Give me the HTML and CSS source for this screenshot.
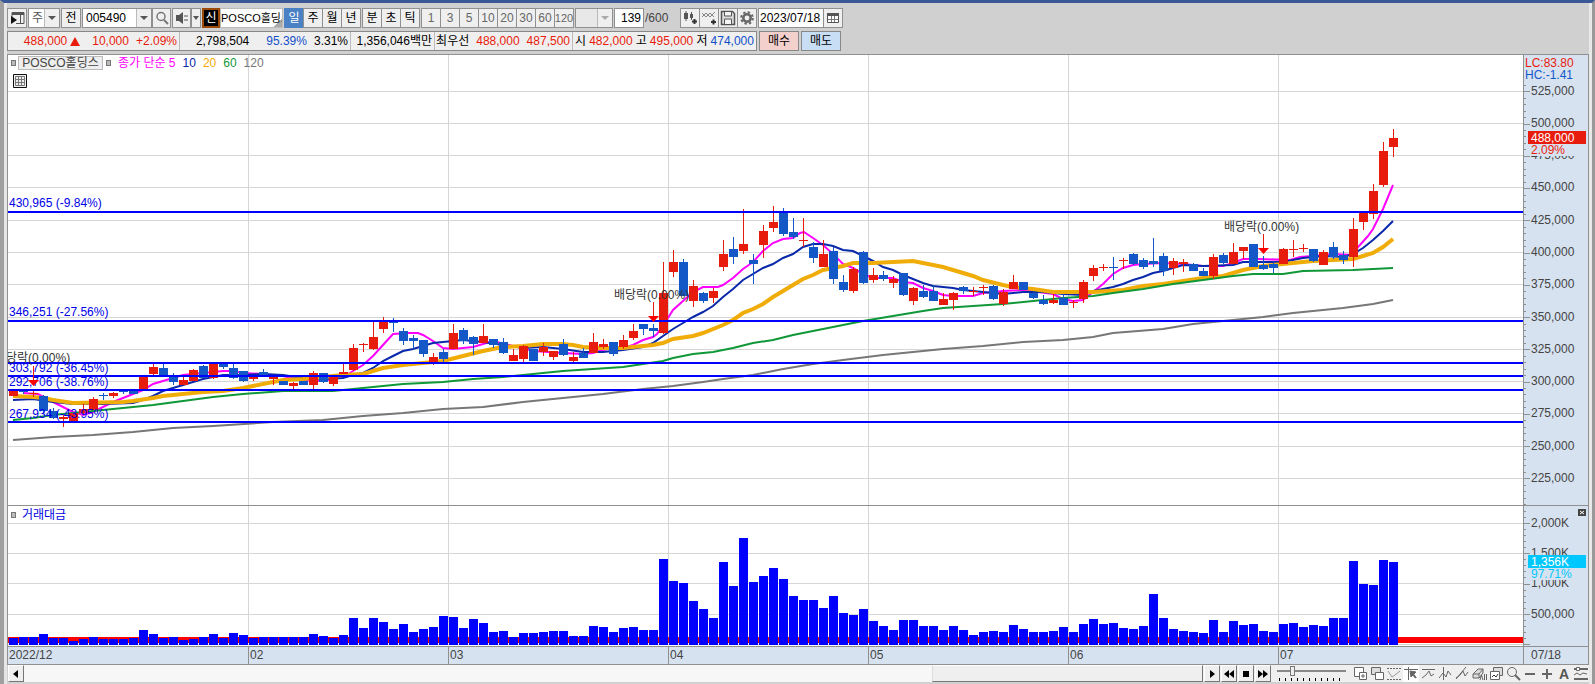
FILE: index.html
```html
<!DOCTYPE html>
<html lang="ko">
<head>
<meta charset="utf-8">
<title>POSCO홀딩스 차트</title>
<link rel="stylesheet" href="styles.css">
</head>
<body>
<main class="window">
  <header class="toolbar">
    <button class="btn" aria-label="패널"><svg width="16" height="16" viewBox="0 0 16 16"><path d="M3 13V2.500H15V13.500H7" fill="none" stroke="#555"/><path d="M3 3h12v2H3z" fill="#555"/><path d="M11.500 5v8" stroke="#555"/><path d="M2 6l6 4-6 4z" fill="#111"/></svg></button>
    <span class="drop drop-market"><select aria-label="시장"><option>주</option></select></span>
    <button class="btn before">전</button>
    <span class="drop drop-code"><input type="text" value="005490" aria-label="종목코드"></span>
    <button class="btn slim" aria-label="검색"><svg width="16" height="16" viewBox="0 0 16 16"><circle cx="7" cy="6.500" r="4" fill="none" stroke="#777" stroke-width="1.500"/><path d="M10 10l4 4" stroke="#777" stroke-width="2"/></svg></button>
    <button class="btn slim sound" aria-label="소리"><svg width="16" height="16" viewBox="0 0 16 16"><path d="M2 5h3l4-3v12l-4-3H2z" fill="#555"/><path d="M11 5v6M13 5v6" stroke="#555" stroke-dasharray="2 2"/></svg></button>
    <button class="btn mini" aria-label="소리 메뉴"><i class="caret"></i></button>
    <span class="badge">신</span>
    <span class="name">POSCO홀딩스</span>
    <div class="group">
      <button class="btn on">일</button><button class="btn">주</button><button class="btn">월</button><button class="btn">년</button>
    </div>
    <div class="group">
      <button class="btn">분</button><button class="btn">초</button><button class="btn">틱</button>
    </div>
    <div class="group dim">
      <button class="btn">1</button><button class="btn">3</button><button class="btn">5</button><button class="btn">10</button><button class="btn">20</button><button class="btn">30</button><button class="btn">60</button><button class="btn">120</button>
    </div>
    <span class="drop drop-off"><select aria-label="주기" disabled><option></option></select></span>
    <label class="count"><input type="text" value="139" aria-label="봉 개수">/600</label>
    <div class="group">
      <button class="btn" aria-label="차트 추가"><svg width="16" height="16" viewBox="0 0 16 16"><path d="M2 3h4v6H2zM8 4h3v4H8z" fill="#555"/><path d="M4 1v10M9.500 2v8" stroke="#555" fill="none"/><path d="M10 11.500h5M12.500 9v5" stroke="#333" stroke-width="2"/></svg></button>
      <button class="btn" aria-label="지표 추가"><svg width="16" height="16" viewBox="0 0 16 16"><path d="M1 7l4-4 4 4 5-5M1 3l4 4 4-4 4 4" fill="none" stroke="#888"/><path d="M10 12h5M12.500 9.500v5" stroke="#333" stroke-width="2"/></svg></button>
      <button class="btn" aria-label="저장"><svg width="16" height="16" viewBox="0 0 16 16"><path d="M1.500 1.500h11l2 2v11h-13z" fill="#ddd" stroke="#555" stroke-width="1.500"/><path d="M4.500 2v4h7V2M4.500 14V9h7v5" fill="#f5f5f5" stroke="#555"/></svg></button>
      <button class="btn" aria-label="설정"><svg width="16" height="16" viewBox="0 0 16 16"><circle cx="8" cy="8" r="3.700" fill="none" stroke="#666" stroke-width="2.500"/><circle cx="8" cy="8" r="5.800" fill="none" stroke="#666" stroke-width="2" stroke-dasharray="2.400 2.150"/></svg></button>
    </div>
    <div class="date"><input type="text" value="2023/07/18" aria-label="날짜"><button class="btn" aria-label="달력"><svg width="16" height="16" viewBox="0 0 16 16"><path d="M2.500 3.500h11v9h-11z" fill="#fff" stroke="#555"/><path d="M2 3h12v3H2z" fill="#555"/><path d="M3 9.500h10M6.500 6v6M9.500 6v6" stroke="#777"/></svg></button></div>
  </header>

  <section class="quotes">
    <div class="quote-box">
      <div class="cell cell-price"><span class="up">488,000</span><i class="tri"></i><span class="up diff">10,000</span><span class="up">+2.09%</span></div>
      <div class="cell cell-vol"><span>2,798,504</span><span class="down">95.39%</span><span>3.31%</span></div>
      <div class="cell cell-amt"><span>1,356,046백만</span></div>
      <div class="cell cell-best"><span>최우선</span><span class="up">488,000</span><span class="up">487,500</span></div>
      <div class="cell cell-ohl"><span>시</span><span class="up">482,000</span><span>고</span><span class="up">495,000</span><span>저</span><span class="down">474,000</span></div>
    </div>
    <button class="trade buy">매수</button>
    <button class="trade sell">매도</button>
  </section>

  <section class="chart">
    <div class="pane price-pane">
      <svg class="plot" id="price" role="img" aria-label="일봉 차트"></svg>
      <div class="legend">
        <i class="dot"></i><span class="chip">POSCO홀딩스</span><i class="dot"></i>
        <span class="ma5">종가 단순 5</span><span class="ma10">10</span><span class="ma20">20</span><span class="ma60">60</span><span class="ma120">120</span>
      </div>
      <button class="grid-btn" aria-label="표"><svg width="14" height="14" viewBox="0 0 14 14"><path d="M.5 .5h13v13H.5z" fill="#eee" stroke="#111"/><path d="M2.500 2.500h9v9h-9zM5.500 3v9M8.500 3v9M2 5.500h10M2 8.500h10" fill="none" stroke="#777"/></svg></button>
    </div>
    <svg class="scale" id="priceScale" role="img" aria-label="가격 축"></svg>
    <div class="pane volume-pane">
      <svg class="plot" id="volume" role="img" aria-label="거래대금 차트"></svg>
      <div class="legend"><i class="dot"></i><span class="vol">거래대금</span></div>
    </div>
    <svg class="scale" id="volumeScale" role="img" aria-label="거래대금 축"></svg>
    <svg class="months" id="months" role="img" aria-label="날짜 축"></svg>
    <div class="today">07/18</div>
  </section>

  <footer class="bottom">
    <button class="step" aria-label="왼쪽"><svg width="14" height="14" viewBox="0 0 14 14"><path d="M9 3v8L4 7z"/></svg></button>
    <div class="track"><div class="thumb"></div></div>
    <button class="step" aria-label="재생"><svg width="14" height="14" viewBox="0 0 14 14"><path d="M5 3v8l5-4z"/></svg></button>
    <button class="step" aria-label="뒤로"><svg width="14" height="14" viewBox="0 0 14 14"><path d="M7 3v8L2 7zM12 3v8L7 7z"/></svg></button>
    <button class="step" aria-label="정지"><svg width="14" height="14" viewBox="0 0 14 14"><path d="M4 4h6v6H4z"/></svg></button>
    <button class="step" aria-label="앞으로"><svg width="14" height="14" viewBox="0 0 14 14"><path d="M2 3v8l5-4zM7 3v8l5-4z"/></svg></button>
    <div class="speed"><input type="range" min="0" max="10" value="2" aria-label="속도"></div>
    <div class="draw">
      <button aria-label="창 추가"><svg viewBox="0 0 16 16"><path d="M2.500 1.500h9v9h-9z" fill="#fff"/><path d="M7.500 6.500h7v7h-7z" fill="#fff"/><path d="M11 8v4M9 10h4"/></svg></button>
      <button aria-label="창 겹침"><svg viewBox="0 0 16 16"><path d="M2.500 1.500h9v7h-9z" fill="#ddd"/><path d="M6.500 6.500h8v7h-8z" fill="#fff"/></svg></button>
      <button aria-label="구간"><svg viewBox="0 0 16 16"><path d="M1 2.500h14M1 13.500h14" stroke-dasharray="2 1"/><path d="M2 5l4 6 3-2 5-4" stroke="#999"/></svg></button>
      <button class="active" aria-label="포인터"><svg viewBox="0 0 16 16"><path d="M1 3.500h14M5.500 1v13"/><path d="M7 5l6 1-5 5z" fill="#666"/><path d="M9 7l4 5" stroke-width="2"/></svg></button>
      <button aria-label="수평선"><svg viewBox="0 0 16 16"><path d="M2 3.500h13M2 12l4-3 3-4 2 5 3-2"/></svg></button>
      <button aria-label="수직선"><svg viewBox="0 0 16 16"><path d="M6.500 1v13M2 12l4-5 3 4 2-6 3 4"/></svg></button>
      <button aria-label="추세선"><svg viewBox="0 0 16 16"><path d="M2 13L12 1M2 12l4-3 3-4 2 5 3-4"/></svg></button>
      <button aria-label="전체 지우기"><svg viewBox="0 0 16 16"><path d="M2 8l5-5h5L8 8zM2 8v4h6V8M8 12l4-5V3" fill="#ddd"/><path d="M9 14l1.500-5 1.500 5M13.500 8v6M15.500 8v6"/></svg></button>
      <button aria-label="차트 복사"><svg viewBox="0 0 16 16"><path d="M5.500 1.500h9v8h-9z" fill="#ddd"/><path d="M2.500 5.500h9v8h-9z" fill="#fff"/><path d="M4 11l2-2 2 2 2-3" stroke="#333"/></svg></button>
      <button aria-label="돋보기"><svg viewBox="0 0 16 16"><circle cx="7" cy="6" r="4.500"/><path d="M10 9l5 5" stroke-width="2"/></svg></button>
      <button aria-label="축소"><svg viewBox="0 0 16 16"><path d="M3 8h10" stroke-width="2"/></svg></button>
      <button aria-label="확대"><svg viewBox="0 0 16 16"><path d="M3 8h10M8 3v10" stroke-width="2"/></svg></button>
      <button class="letter" aria-label="글자">A</button>
      <button aria-label="설정"><svg viewBox="0 0 16 16"><path d="M1 3h14M1 13h14" stroke-width="2"/><path d="M1 9l3-2 3 2 3-2 4 1"/><path d="M3.500 1.500h3v3h-3z" fill="#fff"/></svg></button>
    </div>
  </footer>
</main>
<script src="chart.js"></script>
</body>
</html>
```

FILE: styles.css
```css
:root {
  --ui: "Liberation Sans", "Noto Sans CJK KR", sans-serif;
  --line: #909090;
  --axis: #d7e2f0;
  --red: #e81c0c;
  --blue: #1450c8;
}
* { box-sizing: border-box; }
body { margin: 0; font: 12px/16px var(--ui); color: #000; background: #d0d0d0; }
button, input, select { font: inherit; color: inherit; margin: 0; padding: 0; border-radius: 0; }
button { display: flex; align-items: center; justify-content: center; white-space: nowrap; }

.window {
  min-height: 100vh;
  display: flex;
  flex-direction: column;
  border-top: 3px solid #3a5898;
  border-left: 4px solid #a0a0a0;
  border-right: 3px solid #999;
  box-shadow: inset 3px 0 #e6e6e6, inset -3px 0 #e8e8e8;
  padding: 5px 3px 2px 3px;
}

/* top toolbar */
.toolbar { display: flex; height: 20px; gap: 1px; }
.btn { width: 20px; height: 20px; border: 1px solid var(--line); background: #efefef; overflow: hidden; flex: none; }
.btn svg { flex: none; }
.btn.slim { width: 19px; }
.sound { margin-right: -1px; }
.mini { width: 10px; }
.caret, .drop::after { content: ""; border: 4px solid transparent; border-top-color: #555; border-bottom: 0; }
.mini .caret { border-left-width: 3px; border-right-width: 3px; }
.drop { position: relative; display: flex; border: 1px solid var(--line); background: #fff; flex: none; }
.drop::before { content: ""; position: absolute; right: 0; top: 0; width: 14px; height: 18px; background: #efefef; border-left: 1px solid #bbb; pointer-events: none; }
.drop::after { position: absolute; right: 3px; top: 7px; pointer-events: none; }
.drop select, .drop input { appearance: none; border: 0; background: none; width: 100%; padding-left: 3px; }
.drop-market { width: 32px; color: #555; }
.drop-code { width: 70px; margin-right: -1px; }
.drop-off { width: 38px; background: #e8e8e8; }
.drop-off::after { border-top-color: #aaa; }
.badge { width: 18px; background: #000; color: #fff; border: 2px solid #9c4a08; text-align: center; line-height: 16px; margin-right: -1px; flex: none; }
.name { width: 63px; height: 20px; background: linear-gradient(135deg, transparent 50%, #aaa 50%) right bottom / 8px 8px no-repeat #fff; border: 1px solid #bbb; font-size: 11px; line-height: 18px; overflow: hidden; white-space: nowrap; flex: none; }
.group { display: flex; }
.group .btn + .btn { margin-left: -1px; }
.group .on { background: #4a80c4; color: #fff; border-color: #4a80c4; }
.dim { color: #666; }
.dim .btn:last-child { font-size: 11px; }
.count { display: flex; line-height: 20px; width: 65px; color: #444; flex: none; }
.count input { width: 30px; height: 20px; border: 1px solid var(--line); background: #fff; text-align: right; padding-right: 2px; color: #000; margin-right: 1px; }
.date { display: flex; }
.date input { width: 65px; height: 20px; border: 1px solid var(--line); border-right: 0; background: #fff; padding-left: 1px; }

/* quote line */
.quotes { display: flex; gap: 2px; margin: 3px 0 3px; height: 20px; }
.quote-box { display: flex; border: 1px solid #888; background: #efefef; }
.cell { display: flex; align-items: center; justify-content: flex-end; white-space: nowrap; padding-right: 2px; }
.cell + .cell { border-left: 1px solid #bbb; }
.cell-price { width: 171px; }
.cell-vol { width: 171px; gap: 7px; }
.cell-vol span:first-child { margin-right: 10px; }
.cell-amt { width: 84px; }
.cell-best { width: 138px; gap: 7px; }
.cell-ohl { width: 184px; justify-content: space-between; padding-left: 2px; }
.diff { margin: 0 7px 0 12px; }
.tri { border: 5px solid transparent; border-bottom: 9px solid var(--red); border-top: 0; margin-left: 3px; }
.up { color: var(--red); }
.down { color: var(--blue); }
.trade { width: 40px; border: 1px solid #888; }
.buy { background: #f4d0cc; }
.sell { background: #c8def4; }

/* chart */
.chart { display: grid; grid-template-columns: 1fr 65px; border: 1px solid var(--line); background: #fff; }
.pane { position: relative; min-width: 0; }
.plot, .scale, .months { display: block; width: 100%; overflow: hidden; }
.price-pane, #priceScale { height: 450px; }
.volume-pane, #volumeScale { height: 141px; border-top: 1px solid var(--line); }
.plot { height: 100%; }
.scale, .today { border-left: 1px solid var(--line); background: var(--axis); }
.months, .today { height: 18px; border-top: 1px solid var(--line); background: var(--axis); }
.today { padding-left: 7px; color: #444; }
svg text { font: 12px var(--ui); fill: #444; }
svg .note { fill: #333; }
svg .fib { fill: #0000e8; }
.legend { position: absolute; left: 3px; top: 1px; display: flex; align-items: center; height: 14px; white-space: nowrap; }
.dot { width: 5px; height: 6px; background: #bbb; border: 1px solid #777; }
.chip { background: #eee; border: 1px solid #bbb; line-height: 12px; width: 85px; text-align: center; margin: 0 3px 0 2px; color: #444; }
.ma5, .ma10, .ma20, .ma60 { margin-right: 7px; }
.ma5 { color: #f0f; margin-left: 7px; }
.ma10 { color: #0a28aa; }
.ma20 { color: #f0ac08; }
.ma60 { color: #109838; }
.ma120 { color: #777; }
.volume-pane .legend { top: 2px; }
.vol { color: #0000e0; margin-left: 6px; }
.grid-btn { position: absolute; left: 5px; top: 19px; border: 0; background: none; }

/* bottom bar */
.bottom { display: flex; height: 17px; background: #efefef; margin-left: 1px; }
.step { width: 16px; height: 17px; background: #efefef; border: 1px solid; border-color: #fff #777 #777 #fff; margin-right: 1px; flex: none; overflow: hidden; }
.step:first-child { margin-right: 0; }
.track { flex: 1; background: #f7f7f7; display: flex; justify-content: flex-end; margin-right: 1px; }
.thumb { width: 23%; background: #efefef; border: 1px solid; border-color: #fff #777 #777 #ddd; }
.speed { width: 80px; padding: 1px 5px 0; background: repeating-linear-gradient(90deg, #000 0 1px, transparent 1px 6px) 7px 13px / 66px 3px no-repeat; }
.speed input { appearance: none; display: block; width: 69px; height: 10px; background: linear-gradient(#888, #888) 0 4px / 100% 2px no-repeat; }
.speed input::-webkit-slider-thumb { appearance: none; width: 5px; height: 10px; background: #eee; border: 1px solid #777; }
.draw { display: flex; gap: 1px; }
.draw button { width: 16px; height: 17px; border: 0; background: none; }
.draw svg { width: 16px; height: 16px; fill: none; stroke: #666; flex: none; }
.draw .active { background: #fff; }
.draw .letter { font-weight: bold; font-size: 14px; color: #555; }
```

FILE: chart.js
```js
// Chart space: x0/y0 is the plot's top left corner, one session every 10 units.
const X0 = 8, Y0 = 55, VY0 = 506;
const cx = i => 13 + 10 * i;
const RED = '#e81c0c', BLUE = '#1458c8';

// color, body top, body bottom, high, low
const candles = `r 391 396 391 396|b 391 392 389 394|r 393 394 389 397|b 396 411 395 413|b 411 418 408 419|r 417 419 415 427|r 413 421 413 421|r 409 413 404 415|r 399 410 397 410|b 395 396 393 400|r 393 396 392 398|b 391 392 390 394|b 390 394 390 394|r 377 389 377 389|r 367 374 363 375|b 368 375 363 376|b 377 382 373 385|r 380 385 376 385|r 370 381 369 381|b 366 378 365 378|r 363 378 363 379|b 363 367 363 369|b 368 378 363 379|b 371 381 371 382|r 376 379 376 381|b 372 375 369 375|r 377 379 377 385|b 381 385 381 385|r 383 386 382 389|b 381 385 381 385|r 373 385 371 389|b 373 382 373 383|r 377 384 377 386|r 372 374 363 374|r 348 370 344 371|r 344 345 343 352|r 337 349 320 350|r 322 329 317 333|b 322 323 318 332|b 331 341 328 345|b 338 341 335 349|b 340 354 340 357|r 357 363 353 365|b 352 359 349 362|r 333 349 324 349|b 330 341 328 344|b 337 344 336 355|r 336 343 324 343|b 339 345 339 348|b 342 353 338 354|r 355 361 349 361|r 346 359 345 362|b 349 361 349 361|r 347 352 343 356|r 351 357 351 360|b 344 355 339 356|r 357 361 352 363|b 353 358 348 358|r 342 353 333 353|r 344 347 339 349|b 342 354 342 356|r 340 347 335 349|r 331 338 324 340|b 324 329 324 335|b 328 331 324 337|r 293 333 262 334|r 262 272 250 277|b 262 296 259 296|r 286 301 280 307|b 293 301 292 303|r 291 298 288 303|r 254 267 240 271|b 249 257 237 264|r 244 251 209 254|b 260 264 254 284|r 231 245 225 258|r 222 228 206 232|b 212 234 208 236|b 232 237 218 239|r 240 241 218 247|b 247 258 242 263|r 254 267 240 267|b 251 279 247 284|b 282 290 275 292|r 269 291 267 293|b 252 283 251 284|r 275 280 268 283|b 275 279 271 281|r 279 283 276 288|b 273 295 273 296|r 288 301 287 305|b 291 297 285 298|b 291 301 285 301|r 299 305 293 305|r 293 300 292 310|b 287 291 286 294|r 291 292 287 296|r 287 288 285 295|b 286 299 285 300|r 292 304 289 306|r 282 289 275 289|b 282 290 282 290|b 293 298 292 299|b 300 304 295 305|r 300 303 294 304|b 298 305 294 305|r 302 303 300 308|r 282 299 280 303|r 268 276 265 281|r 267 268 264 271|b 267 268 257 280|r 260 261 258 269|b 254 264 253 265|b 260 267 258 269|b 261 264 238 267|b 256 271 253 276|r 261 268 258 275|r 262 264 259 272|b 264 271 263 271|b 271 276 268 276|r 257 276 254 279|b 255 263 253 264|r 252 264 243 264|r 247 251 247 259|b 244 267 244 267|b 265 269 256 270|b 264 268 262 273|r 249 264 248 264|r 249 250 240 257|r 248 249 244 252|b 249 261 249 262|r 252 265 250 265|b 247 257 242 259|b 255 260 251 264|r 229 257 218 267|r 213 222 213 230|r 191 214 184 219|r 151 185 142 187|r 138 147 129 157`
  .split('|').map(s => s.split(' '));

const averages = [
  ['#f0f', 2, '23,393 38,394 53,402 63,407 73,412 83,415 93,412 103,407 113,402 123,398 133,394 143,390 153,384 163,381 173,378 183,375 203,373 223,371 233,371 243,373 263,374 283,376 300,380 323,381 343,377 353,371 363,365 373,356 383,345 393,334 408,333 418,333 423,335 433,341 443,348 453,349 473,347 483,344 493,341 513,346 523,348 533,351 563,353 583,354 593,353 603,350 613,348 623,348 633,345 643,340 653,337 657,334 663,325 668,318 673,310 683,301 693,292 703,287 718,287 723,285 733,278 743,269 753,262 763,251 773,243 783,239 793,238 800,233 804,232 813,238 823,245 833,254 843,264 853,268 863,274 873,278 893,278 903,282 913,283 923,288 933,291 943,295 953,296 973,296 983,293 1003,291 1023,290 1053,294 1063,299 1073,301 1083,300 1093,292 1103,284 1113,274 1123,268 1133,265 1143,264 1163,263 1183,264 1203,266 1223,266 1233,263 1243,259 1258,259 1290,260 1300,257 1313,256 1333,254 1353,255 1358,247 1368,236 1373,229 1383,209 1393,185'],
  ['#0a28aa', 2, '13,400 33,399 53,402 73,404 103,404 133,403 143,400 153,396 163,391 183,385 203,379 223,375 243,375 263,374 283,375 303,378 323,379 343,378 353,375 363,373 373,368 383,361 393,356 403,351 413,349 433,343 443,342 463,340 483,342 503,345 523,348 543,347 563,349 583,352 603,352 623,350 643,347 653,343 663,336 673,329 683,323 693,317 703,312 713,306 723,297 733,289 743,280 753,274 763,268 773,264 783,258 793,254 803,247 813,244 823,244 833,246 843,250 853,251 863,256 873,261 883,267 893,270 903,275 923,283 933,286 953,288 963,290 983,292 1003,294 1023,292 1043,292 1063,294 1083,295 1093,291 1103,289 1113,287 1123,284 1133,280 1143,277 1153,273 1163,271 1173,268 1183,265 1203,266 1233,265 1243,262 1283,262 1303,258 1323,256 1343,257 1353,254 1363,248 1373,240 1383,231 1393,221'],
  ['#f0ac08', 4, '13,396 33,397 43,398 53,400 73,403 123,402 133,401 153,398 163,396 183,394 203,392 223,391 243,388 263,384 283,380 303,379 343,375 363,374 373,371 383,368 403,365 423,363 443,361 463,356 483,351 503,347 523,346 543,344 563,344 573,345 583,347 603,348 623,348 643,346 653,345 663,343 673,339 693,336 703,333 723,325 733,320 743,313 753,309 763,304 773,297 783,291 793,285 803,279 813,275 823,270 833,268 843,266 853,263 873,263 893,262 913,261 923,263 943,267 953,270 973,276 983,280 1003,285 1013,287 1033,289 1053,292 1093,292 1123,290 1143,286 1163,284 1183,281 1203,278 1223,276 1243,270 1263,266 1293,263 1313,261 1353,259 1363,256 1373,253 1383,247 1393,239'],
  ['#109838', 2, '13,420 33,418 53,415 83,412 113,409 153,405 183,401 213,397 243,394 283,391 333,391 353,389 373,387 403,384 443,382 473,379 503,377 533,374 563,371 593,369 623,367 643,364 663,361 673,358 693,354 713,352 733,348 753,343 773,340 793,335 813,331 843,325 863,321 893,316 923,311 943,308 973,306 1003,304 1033,301 1063,298 1093,296 1113,293 1143,289 1173,284 1203,280 1233,276 1253,274 1283,274 1303,271 1353,270 1393,268'],
  ['#777', 2, '13,440 53,437 93,435 133,432 173,428 213,426 273,422 323,420 363,416 403,413 443,409 483,407 523,402 563,398 603,394 643,389 673,386 703,382 723,379 753,375 783,369 813,364 843,360 883,355 913,352 943,349 983,346 1023,342 1063,340 1093,337 1113,333 1163,329 1193,324 1233,320 1263,317 1293,313 1343,308 1373,304 1393,300']
];

// top edge of every volume bar
const tops = [638,637,637,634,638,638,641,639,637,639,639,639,638,630,634,638,637,640,639,637,634,638,633,635,638,637,637,637,637,637,634,636,638,635,618,628,618,622,629,624,632,629,627,616,617,628,619,623,632,631,637,633,633,632,631,631,636,636,626,627,632,628,627,630,630,559,581,583,601,609,618,562,586,538,582,576,568,579,596,600,600,608,596,613,615,609,621,626,630,620,620,626,626,630,626,630,635,632,631,632,625,629,632,632,631,627,632,624,619,624,623,628,629,626,594,618,629,631,632,633,620,632,621,625,624,631,632,624,623,627,625,626,618,618,561,584,585,560,562];

const gridX = [[248, '02'], [448, '03'], [668, '04'], [868, '05'], [1068, '06'], [1278, '07']];
const gridY = [91, 123, 155, 187, 220, 252, 284, 317, 349, 381, 413, 446, 478];
const levels = [212, 321, 363, 376, 390, 422];
const fibs = [[207, '430,965 (-9.84%)'], [316, '346,251 (-27.56%)'], [372, '303,792 (-36.45%)'], [386, '292,706 (-38.76%)'], [418, '267,934 (-43.95%)']];
const notes = [[-5, 362, 33, 366, 380], [614, 299, 653, 302, 316], [1224, 231, 1263, 234, 248]];

const rect = (x, y, w, h, f) => `<rect x="${x}" y="${y}" width="${w}" height="${h}" fill="${f}"/>`;
const text = (x, y, t, a = '') => `<text x="${x}" y="${y}" ${a}>${t}</text>`;
const put = (id, s) => { document.getElementById(id).innerHTML = s; };

// price pane
let s = '<g shape-rendering="crispEdges">';
s += `<g transform="translate(0 ${-Y0})">` + gridY.map(y => rect(0, y, '100%', 1, '#d6d6d6')).join('') + '</g>';
s += `<g transform="translate(${-X0} ${-Y0})">`;
s += gridX.map(([x]) => rect(x, Y0, 1, 450, '#d6d6d6')).join('');
s += averages.map(([c, w, p]) => `<polyline points="${p}" fill="none" stroke="${c}" stroke-width="${w}" shape-rendering="geometricPrecision"/>`).join('');
candles.forEach(([c, t, b, h, l], i) => {
  const f = c === 'r' ? RED : BLUE;
  s += rect(cx(i), h, 1, l - h, f) + rect(cx(i) - 4, t, 9, b - t, f);
});
s += '</g>';
s += `<g transform="translate(0 ${-Y0})">` + levels.map(y => rect(0, y - 1, '100%', 2, '#00f')).join('') + '</g></g>';
s += `<g transform="translate(${-X0} ${-Y0})">`;
s += fibs.map(([y, t]) => text(9, y, t, 'class="fib"')).join('');
s += notes.map(([x, y, ax, a, b]) => text(x, y, '배당락(0.00%)', 'class="note"') +
  rect(ax, a, 1, b - a, RED) + `<path d="M${ax - 5} ${b}h11l-5.500 6z" fill="#f00"/>`).join('');
put('price', s + '</g>');

// price scale
s = `<g transform="translate(-1524 ${-Y0})">`;
for (let k = -1; k < 65; k++) {
  const y = Math.round(91.300 + k * 6.450);
  if (y < 505) s += rect(1524, y, k % 5 ? 2 : 6, 1, '#909090');
}
gridY.forEach((y, k) => { s += text(1531, y + 4, (525 - 25 * k) + ',000'); });
s += rect(1531, 144, 55, 12, '#d7e2f0') + rect(1528, 131, 58, 13, RED);
s += text(1531, 142, '488,000', 'style="fill:#fff"') + text(1531, 154, '2.09%', `style="fill:${RED}"`);
s += text(1525, 67, 'LC:83.80', `style="fill:${RED}"`) + text(1525, 79, 'HC:-1.41', `style="fill:${BLUE}"`);
put('priceScale', s + '</g>');

// volume pane
s = `<g transform="translate(0 ${-VY0})" shape-rendering="crispEdges">`;
s += [523, 553, 583, 614, 644].map(y => rect(0, y, '100%', 1, '#d6d6d6')).join('') + rect(0, 637, '100%', 6, '#f00') + '</g>';
s += `<g transform="translate(${-X0} ${-VY0})" shape-rendering="crispEdges">`;
s += gridX.map(([x]) => rect(x, VY0, 1, 131, '#d6d6d6')).join('');
s += tops.map((y, i) => rect(cx(i) - 4, y, 9, 645 - y, '#00f')).join('');
put('volume', s + '</g>');

// volume scale
s = `<g transform="translate(-1524 ${-VY0})">`;
for (let k = -2; k <= 20; k++) s += rect(1524, Math.round(523 + k * 6.050), k % 5 ? 2 : 6, 1, '#909090');
s += text(1531, 527, '2,000K') + text(1531, 557, '1,500K') + text(1531, 587, '1,000K') + text(1531, 618, '500,000');
s += rect(1531, 568, 55, 12, '#d7e2f0') + rect(1528, 555, 58, 13, '#00c8ff');
s += text(1531, 566, '1,356K', 'style="fill:#fff"') + text(1531, 578, '97.71%', 'style="fill:#00c8ff"');
s += rect(1578, 509, 8, 7, '#444') + '<path d="M1580 511l4 3M1584 511l-4 3" stroke="#fff"/>';
put('volumeScale', s + '</g>');

// months
s = text(1, 12, '2022/12');
gridX.forEach(([x, t]) => { s += rect(x - X0, 0, 1, 18, '#909090') + text(x - X0 + 2, 12, t); });
put('months', s);
```
